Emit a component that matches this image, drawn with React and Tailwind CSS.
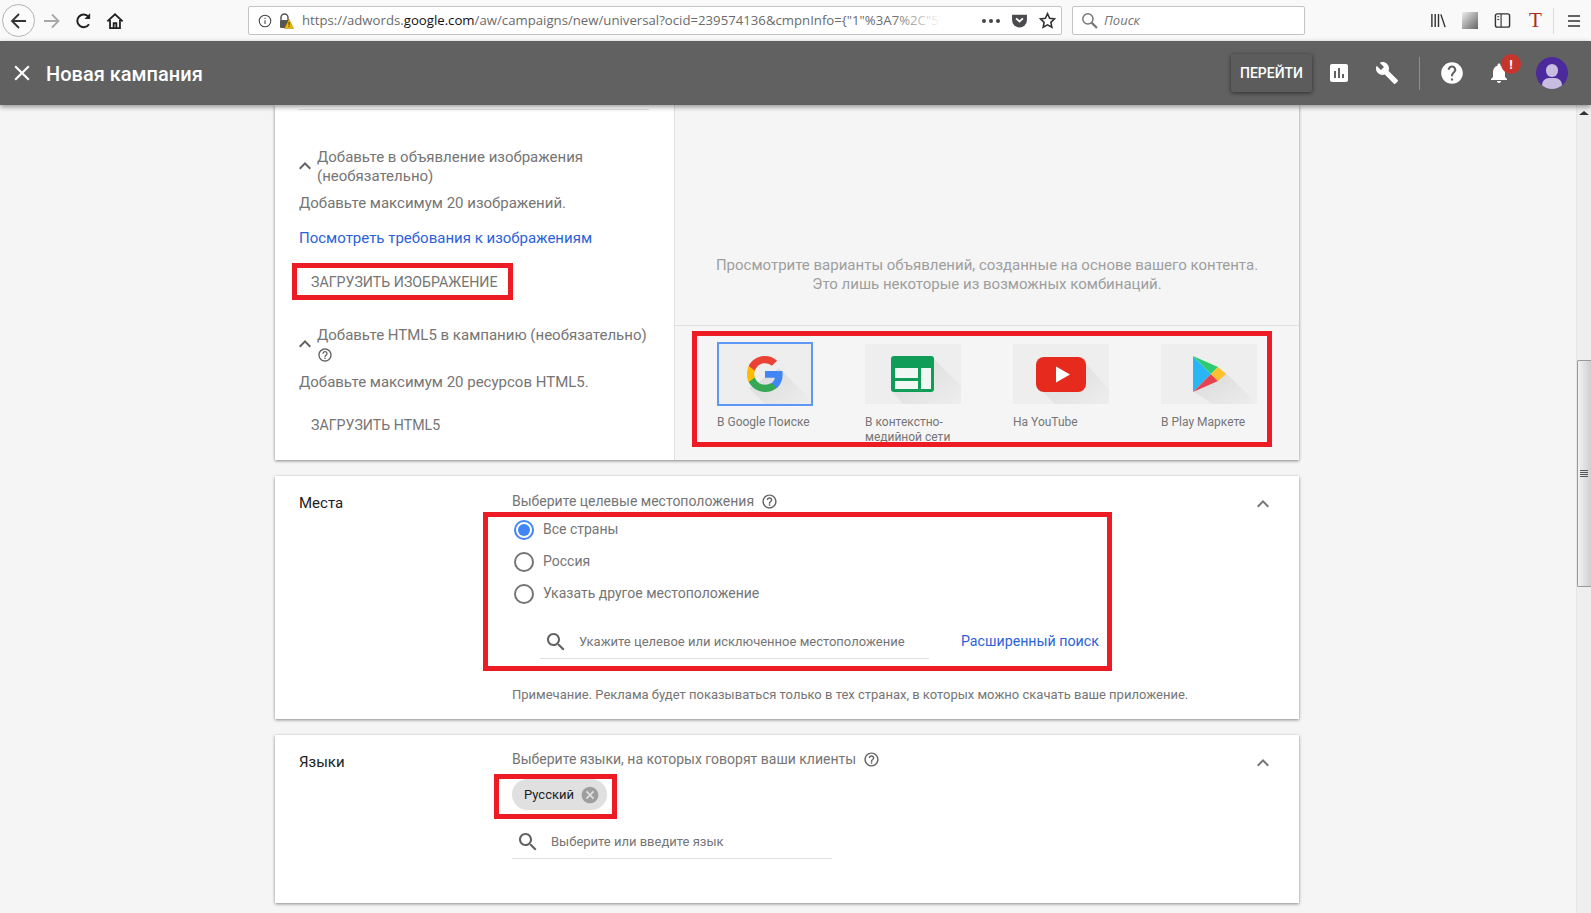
import React from "react";

const P = {
  assess: "M19 3H5c-1.1 0-2 .9-2 2v14c0 1.1.9 2 2 2h14c1.1 0 2-.9 2-2V5c0-1.1-.9-2-2-2zM9 17H7v-7h2v7zm4 0h-2V7h2v10zm4 0h-2v-4h2v4z",
  wrench: "M22.7 19l-9.1-9.1c.9-2.3.4-5-1.5-6.9-2-2-5-2.4-7.4-1.3L9 6 6 9 1.6 4.7C.4 7.1.9 10.1 2.9 12.1c1.9 1.9 4.6 2.4 6.9 1.5l9.1 9.1c.4.4 1 .4 1.4 0l2.3-2.3c.5-.4.5-1.1.1-1.4z",
  help: "M12 2C6.48 2 2 6.48 2 12s4.48 10 10 10 10-4.48 10-10S17.52 2 12 2zm1 17h-2v-2h2v2zm2.07-7.75l-.9.92C13.45 12.9 13 13.5 13 15h-2v-.5c0-1.1.45-2.1 1.17-2.83l1.24-1.26c.37-.36.59-.86.59-1.41 0-1.1-.9-2-2-2s-2 .9-2 2H8c0-2.21 1.79-4 4-4s4 1.79 4 4c0 .88-.36 1.68-.93 2.25z",
  bell: "M12 22c1.1 0 2-.9 2-2h-4c0 1.1.89 2 2 2zm6-6v-5c0-3.07-1.64-5.64-4.5-6.32V4c0-.83-.67-1.5-1.5-1.5s-1.5.67-1.5 1.5v.68C7.63 5.36 6 7.92 6 11v5l-2 2v1h16v-1l-2-2z",
  helpO: "M11 18h2v-2h-2v2zm1-16C6.48 2 2 6.48 2 12s4.48 10 10 10 10-4.48 10-10S17.52 2 12 2zm0 18c-4.41 0-8-3.59-8-8s3.59-8 8-8 8 3.59 8 8-3.59 8-8 8zm0-14c-2.21 0-4 1.79-4 4h2c0-1.1.9-2 2-2s2 .9 2 2c0 2-3 1.75-3 5h2c0-2.25 3-2.5 3-5 0-2.21-1.79-4-4-4z",
  search: "M15.5 14h-.79l-.28-.27C15.41 12.59 16 11.11 16 9.5 16 5.91 13.09 3 9.5 3S3 5.91 3 9.5 5.91 16 9.5 16c1.61 0 3.09-.59 4.23-1.57l.27.28v.79l5 4.99L20.49 19l-4.99-5zm-6 0C7.01 14 5 11.99 5 9.5S7.01 5 9.5 5 14 7.01 14 9.5 11.99 14 9.5 14z",
  close: "M19 6.41L17.59 5 12 10.59 6.41 5 5 6.41 10.59 12 5 17.59 6.41 19 12 13.41 17.59 19 19 17.59 13.41 12z",
  less: "M12 8l-6 6 1.41 1.41L12 10.83l4.59 4.58L18 14z",
  cancel: "M12 2C6.47 2 2 6.47 2 12s4.47 10 10 10 10-4.47 10-10S17.53 2 12 2zm5 13.59L15.59 17 12 13.41 8.41 17 7 15.59 10.59 12 7 8.41 8.41 7 12 10.59 15.59 7 17 8.41 13.41 12 17 15.59z",
};

function Ic({ d, className }) {
  return (
    <svg viewBox="0 0 24 24" className={className} fill="currentColor">
      <path d={d} />
    </svg>
  );
}

function Red({ className }) {
  return <div className={"absolute border-[5px] border-[#ed1c24] pointer-events-none " + className} />;
}

function BrowserBar() {
  return (
    <div className="h-[41px] shrink-0 bg-[#f9f9fa] flex items-center text-[#4a4a4f]" style={{ fontFamily: '"Open Sans", sans-serif' }}>
      <div className="ml-[2px] w-[33px] h-[33px] rounded-full border border-[#b1b1b3] bg-[#fbfbfb] flex items-center justify-center">
        <svg viewBox="0 0 20 20" className="w-[20px] h-[20px]" fill="none" stroke="#333" strokeWidth="1.8"><path d="M17 10H3.5M10 3l-7 7 7 7" /></svg>
      </div>
      <svg viewBox="0 0 20 20" className="ml-[7px] w-[20px] h-[20px]" fill="none" stroke="#a8a8a8" strokeWidth="1.8"><path d="M2 10h14M10 3.5l6.5 6.5-6.5 6.5" /></svg>
      <svg viewBox="0 0 20 20" className="ml-[13px] w-[18px] h-[18px]" fill="none" stroke="#222" strokeWidth="2.2"><path d="M15.5 13.5A7 7 0 1 1 15 5.5" /><path d="M16.8 1.5v6.3h-6.3z" fill="#222" stroke="none" /></svg>
      <svg viewBox="0 0 20 20" className="ml-[13px] w-[18px] h-[18px]" fill="none" stroke="#222" strokeWidth="2"><path d="M1.5 10.5L10 2.5l8.5 8M4.5 9v9h11V9" /><path d="M8.5 18v-5.5h3V18" /></svg>

      <div className="ml-[124px] w-[814px] h-[29px] bg-white border border-[#c4c4c4] rounded-[2px] flex items-center">
        <svg viewBox="0 0 16 16" className="ml-[9px] w-[14px] h-[14px]" fill="none" stroke="#444" strokeWidth="1.2"><circle cx="8" cy="8" r="6.6" /><path d="M8 7v4.5M8 4.2v1.6" /></svg>
        <svg viewBox="0 0 16 16" className="ml-[6px] w-[16px] h-[16px]">
          <path d="M3 7V4.5a3.5 3.5 0 0 1 7 0V7" fill="none" stroke="#555" strokeWidth="1.5" />
          <rect x="2" y="7" width="9" height="8" rx="1" fill="#555" />
          <path d="M11 6l4.6 9.5H6.4z" fill="#f5b800" stroke="#8a6d00" strokeWidth=".4" />
          <rect x="10.6" y="9" width=".9" height="3.4" fill="#222" />
          <rect x="10.6" y="13" width=".9" height="1" fill="#222" />
        </svg>
        <div className="relative ml-[8px] pt-[1px] w-[640px] overflow-hidden whitespace-nowrap text-[13.2px] text-[#6b6b6b]">
          https://adwords.<span className="text-[#111]">google.com</span>/aw/campaigns/new/universal?ocid=239574136&amp;cmpnInfo={"{"}"1"%3A7%2C"5"
          <div className="absolute right-0 top-0 bottom-0 w-[50px] bg-gradient-to-r from-transparent to-white" />
        </div>
        <div className="ml-[40px] flex gap-[3px]">
          <span className="w-[4px] h-[4px] rounded-full bg-[#444]" />
          <span className="w-[4px] h-[4px] rounded-full bg-[#444]" />
          <span className="w-[4px] h-[4px] rounded-full bg-[#444]" />
        </div>
        <svg viewBox="0 0 16 16" className="ml-[11px] w-[17px] h-[17px]"><path d="M1 2.5h14v5a7 7 0 0 1-14 0z" fill="#4a4a4f" /><path d="M4.8 6l3.2 3 3.2-3" fill="none" stroke="#fff" strokeWidth="1.8" /></svg>
        <svg viewBox="0 0 16 16" className="ml-[11px] w-[17px] h-[17px]" fill="none" stroke="#333" strokeWidth="1.5"><path d="M8 1.6l2 4.3 4.6.6-3.4 3.2.9 4.7L8 12.1l-4.1 2.3.9-4.7L1.4 6.5 6 5.9z" /></svg>
      </div>

      <div className="ml-[10px] w-[233px] h-[29px] bg-white border border-[#c4c4c4] rounded-[2px] flex items-center">
        <svg viewBox="0 0 16 16" className="ml-[8px] w-[17px] h-[17px]" fill="none" stroke="#777" strokeWidth="1.4"><circle cx="6.5" cy="6.5" r="4.8" /><path d="M10 10l5 5" strokeWidth="2" /></svg>
        <span className="ml-[6px] pt-[1px] text-[13px] italic text-[#757575]">Поиск</span>
      </div>

      <svg viewBox="0 0 18 18" className="ml-[125px] w-[17px] h-[17px]" fill="none" stroke="#333" strokeWidth="1.5"><path d="M2 2v14M5.5 2v14M9 2v14M11.5 2.5L16 16" /></svg>
      <div className="ml-[15px] w-[16px] h-[17px] bg-gradient-to-br from-[#eeeeee] to-[#666666]" />
      <svg viewBox="0 0 18 18" className="ml-[16px] w-[17px] h-[17px]" fill="none" stroke="#333" strokeWidth="1.5"><rect x="1.5" y="2" width="15" height="14" rx="2" /><path d="M7.5 2v14M3.5 5h2M3.5 8h2" strokeWidth="1.2" /></svg>
      <span className="ml-[18px] text-[21px] leading-none text-[#b02a1c]" style={{ fontFamily: '"Liberation Serif", serif' }}>T</span>
      <div className="ml-[11px] w-px h-[26px] bg-[#dcdcdc]" />
      <svg viewBox="0 0 14 14" className="ml-[13px] w-[14px] h-[14px]" fill="none" stroke="#333" strokeWidth="1.7"><path d="M1 2h12M1 7h12M1 12h12" /></svg>
    </div>
  );
}

function Header() {
  return (
    <div className="relative z-10 h-[64px] shrink-0 bg-[#616161] shadow-[0_2px_5px_rgba(0,0,0,0.4)] flex items-center text-white pr-[23px]">
      <Ic d={P.close} className="ml-[9px] w-[26px] h-[26px]" />
      <span className="ml-[11px] pt-[2px] text-[20px] font-medium">Новая кампания</span>
      <div className="ml-auto w-[81px] h-[38px] rounded-[2px] bg-[#5c5c5c] shadow-[0_1px_4px_rgba(0,0,0,0.55)] flex items-center justify-center text-[14px] font-medium">ПЕРЕЙТИ</div>
      <Ic d={P.assess} className="ml-[15px] w-[24px] h-[24px]" />
      <Ic d={P.wrench} className="ml-[24px] w-[24px] h-[24px]" />
      <div className="ml-[20px] w-px h-[33px] bg-[#8f8f8f]" />
      <Ic d={P.help} className="ml-[19px] w-[26px] h-[26px]" />
      <div className="relative ml-[22px] w-[24px] h-[24px]">
        <Ic d={P.bell} className="w-[24px] h-[24px]" />
        <div className="absolute left-[14px] -top-[7px] w-[20px] h-[20px] rounded-full bg-[#c5352b] flex items-center justify-center text-[13px] font-bold leading-none">!</div>
      </div>
      <div className="relative ml-[25px] w-[32px] h-[32px] rounded-full bg-[#4c2a9c] overflow-hidden">
        <div className="absolute left-[10px] top-[7px] w-[12px] h-[13px] rounded-full bg-[#c8bde0]" />
        <div className="absolute left-[6px] top-[21px] w-[20px] h-[14px] rounded-full bg-[#c8bde0]" />
      </div>
    </div>
  );
}

function Tile({ children, selected, label }) {
  return (
    <div className="w-[96px]">
      <div className="relative w-[96px] h-[60px]">
        <div className="w-[96px] h-[60px] bg-[#eeeeee] overflow-hidden">{children}</div>
        {selected && <div className="absolute inset-x-0 -top-[2px] -bottom-[2px] border-2 border-[#5e97f6]" />}
      </div>
      <div className="mt-[11px] text-[12px] leading-[15px] text-[#757575]">{label}</div>
    </div>
  );
}

function GoogleTile() {
  return (
    <svg viewBox="0 0 96 60" className="w-[96px] h-[60px]">
      <defs>
        <linearGradient id="sg" x1="0" y1="0" x2="1" y2="1"><stop offset="0" stopColor="#d8d8d8" /><stop offset="1" stopColor="#eeeeee" /></linearGradient>
      </defs>
      <path d="M62 24L96 58v2H48L32 44z" fill="url(#sg)" />
      <g transform="translate(30 12) scale(.75)">
        <path fill="#4285F4" d="M47.5 24.6c0-1.6-.1-3.1-.4-4.6H24v9.1h13.2c-.6 3-2.3 5.6-4.9 7.3v6.1h7.9c4.6-4.3 7.3-10.6 7.3-17.9z" />
        <path fill="#34A853" d="M24 48c6.5 0 11.9-2.1 15.9-5.8l-7.9-6.1c-2.2 1.5-4.9 2.3-8 2.3-6.3 0-11.6-4.2-13.5-9.9H2.3v6.3C6.3 42.7 14.5 48 24 48z" />
        <path fill="#FBBC05" d="M10.5 28.5c-.5-1.5-.8-3-.8-4.5s.3-3.1.8-4.5v-6.3H2.3C.8 16.3 0 20 0 24s.8 7.7 2.3 10.8z" />
        <path fill="#EA4335" d="M24 9.5c3.5 0 6.7 1.2 9.2 3.6l6.9-6.9C35.9 2.4 30.5 0 24 0 14.5 0 6.3 5.3 2.3 13.2l8.2 6.3C12.4 13.7 17.7 9.5 24 9.5z" />
      </g>
    </svg>
  );
}

function DisplayTile() {
  return (
    <svg viewBox="0 0 96 60" className="w-[96px] h-[60px]">
      <defs>
        <linearGradient id="sd" x1="0" y1="0" x2="1" y2="1"><stop offset="0" stopColor="#d8d8d8" /><stop offset="1" stopColor="#eeeeee" /></linearGradient>
      </defs>
      <path d="M66 12L96 42v18H38L26 46z" fill="url(#sd)" />
      <rect x="26" y="12" width="43" height="36" rx="3" fill="#0f9d58" />
      <rect x="30" y="24" width="23" height="10" fill="#f1f8f4" />
      <rect x="30" y="37" width="23" height="8" fill="#f1f8f4" />
      <rect x="56" y="24" width="10" height="21" fill="#f1f8f4" />
    </svg>
  );
}

function YoutubeTile() {
  return (
    <svg viewBox="0 0 96 60" className="w-[96px] h-[60px]">
      <defs>
        <linearGradient id="sy" x1="0" y1="0" x2="1" y2="1"><stop offset="0" stopColor="#d8d8d8" /><stop offset="1" stopColor="#eeeeee" /></linearGradient>
      </defs>
      <path d="M68 14L96 46v14H42L28 46z" fill="url(#sy)" />
      <rect x="23" y="13" width="50" height="35" rx="8" fill="#e62b1e" />
      <path d="M43 22.5l14 8-14 8z" fill="#fff" />
    </svg>
  );
}

function PlayTile() {
  return (
    <svg viewBox="0 0 96 60" className="w-[96px] h-[60px]">
      <defs>
        <linearGradient id="sp" x1="0" y1="0" x2="1" y2="1"><stop offset="0" stopColor="#d8d8d8" /><stop offset="1" stopColor="#eeeeee" /></linearGradient>
      </defs>
      <path d="M64 28L96 60H52L33 48z" fill="url(#sp)" />
      <path d="M32 12v36l18-18z" fill="#29b6f6" />
      <path d="M32 12l18 18 7-7z" fill="#2ecc71" />
      <path d="M32 48l18-18 7 7z" fill="#e8414f" />
      <path d="M57 23l-7 7 7 7 8-7z" fill="#fbc02d" />
    </svg>
  );
}

function Card1() {
  return (
    <div className="relative bg-white shadow-[0_1px_3px_rgba(0,0,0,0.45)] flex h-[355px]">
      <div className="w-[400px] shrink-0 border-r border-[#e0e0e0] pl-[24px] pr-[25px] pt-[4px] text-[15px] leading-[19px] text-[#757575]">
        <div className="h-px bg-[#e0e0e0]" />
        <div className="mt-[38px] flex">
          <Ic d={P.less} className="mt-[6px] -ml-[6px] w-[24px] h-[24px] text-[#616161] shrink-0" />
          <div>Добавьте в объявление изображения<br />(необязательно)</div>
        </div>
        <div className="mt-[8px]">Добавьте максимум 20 изображений.</div>
        <div className="mt-[16px] text-[#2b62d9]">Посмотреть требования к изображениям</div>
        <div className="mt-[25px] ml-[12px] text-[14.2px]">ЗАГРУЗИТЬ ИЗОБРАЖЕНИЕ</div>
        <div className="mt-[34px] flex">
          <Ic d={P.less} className="mt-[6px] -ml-[6px] w-[24px] h-[24px] text-[#616161] shrink-0" />
          <div>
            <div className="whitespace-nowrap">Добавьте HTML5 в кампанию (необязательно)</div>
            <Ic d={P.helpO} className="w-[16px] h-[16px] mt-[2px] text-[#616161]" />
          </div>
        </div>
        <div className="mt-[10px]">Добавьте максимум 20 ресурсов HTML5.</div>
        <div className="mt-[24px] ml-[12px] text-[14.2px]">ЗАГРУЗИТЬ HTML5</div>
      </div>
      <div className="flex-1 bg-[#f5f5f5] flex flex-col">
        <div className="h-[221px] border-b border-[#e0e0e0] flex flex-col justify-end pb-[31px] text-center text-[15px] leading-[19px] text-[#9e9e9e]">
          <div>Просмотрите варианты объявлений, созданные на основе вашего контента.</div>
          <div>Это лишь некоторые из возможных комбинаций.</div>
        </div>
        <div className="pl-[42px] pt-[18px] flex gap-[52px]">
          <Tile selected label="В Google Поиске"><GoogleTile /></Tile>
          <Tile label="В контекстно-медийной сети"><DisplayTile /></Tile>
          <Tile label="На YouTube"><YoutubeTile /></Tile>
          <Tile label="В Play Маркете"><PlayTile /></Tile>
        </div>
      </div>
      <Red className="left-[17px] top-[158px] w-[221px] h-[37px]" />
      <Red className="left-[417px] top-[226px] w-[580px] h-[116px]" />
    </div>
  );
}

function Radio({ on, label }) {
  return (
    <div className="h-[32px] flex items-center text-[14px] text-[#757575]">
      <div className={"w-[20px] h-[20px] rounded-full border-2 flex items-center justify-center " + (on ? "border-[#4285f4]" : "border-[#757575]")}>
        {on && <div className="w-[12px] h-[12px] rounded-full bg-[#4285f4]" />}
      </div>
      <span className="ml-[9px] pb-[2px]">{label}</span>
    </div>
  );
}

function Card2() {
  return (
    <div className="relative mt-[16px] bg-white shadow-[0_1px_3px_rgba(0,0,0,0.45)] flex h-[243px]">
      <div className="w-[237px] shrink-0 pl-[24px] pt-[18px] text-[15px] leading-[19px] text-[#212121]">Места</div>
      <div className="flex-1 pt-[16px]">
        <div className="flex items-center text-[14px] leading-[19px] text-[#757575]">
          Выберите целевые местоположения
          <Ic d={P.helpO} className="ml-[7px] w-[17px] h-[17px] text-[#616161]" />
        </div>
        <div className="mt-[3px] pl-[2px]">
          <Radio on label="Все страны" />
          <Radio label="Россия" />
          <Radio label="Указать другое местоположение" />
        </div>
        <div className="mt-[15px] ml-[28px] flex items-start">
          <div className="w-[389px] h-[34px] border-b border-[#e0e0e0] flex items-center">
            <Ic d={P.search} className="ml-[4px] w-[24px] h-[24px] text-[#616161]" />
            <span className="ml-[11px] text-[13px] text-[#757575]">Укажите целевое или исключенное местоположение</span>
          </div>
          <div className="ml-[32px] h-[34px] flex items-center text-[14.2px] text-[#2b62d9] whitespace-nowrap pb-[1px]">Расширенный поиск</div>
        </div>
        <div className="mt-[28px] text-[13px] leading-[16px] text-[#757575] whitespace-nowrap">Примечание. Реклама будет показываться только в тех странах, в которых можно скачать ваше приложение.</div>
      </div>
      <Ic d={P.less} className="mt-[16px] mr-[24px] w-[24px] h-[24px] text-[#757575] shrink-0" />
      <Red className="left-[208px] top-[36px] w-[629px] h-[159px]" />
    </div>
  );
}

function Card3() {
  return (
    <div className="relative mt-[16px] bg-white shadow-[0_1px_3px_rgba(0,0,0,0.45)] flex h-[168px]">
      <div className="w-[237px] shrink-0 pl-[24px] pt-[18px] text-[15px] leading-[19px] text-[#212121]">Языки</div>
      <div className="flex-1 pt-[15px]">
        <div className="flex items-center text-[14px] leading-[19px] text-[#757575]">
          Выберите языки, на которых говорят ваши клиенты
          <Ic d={P.helpO} className="ml-[7px] w-[17px] h-[17px] text-[#616161]" />
        </div>
        <div className="mt-[10px] w-[95px] h-[31px] rounded-full bg-[#e0e0e0] flex items-center pl-[12px] text-[13px] text-[#212121]">
          Русский
          <Ic d={P.cancel} className="ml-[6px] w-[20px] h-[20px] text-[#9e9e9e]" />
        </div>
        <div className="mt-[15px] w-[320px] h-[34px] border-b border-[#e0e0e0] flex items-center">
          <Ic d={P.search} className="ml-[4px] w-[24px] h-[24px] text-[#616161]" />
          <span className="ml-[11px] text-[13px] text-[#757575]">Выберите или введите язык</span>
        </div>
      </div>
      <Ic d={P.less} className="mt-[16px] mr-[24px] w-[24px] h-[24px] text-[#757575] shrink-0" />
      <Red className="left-[219px] top-[39px] w-[123px] h-[45px]" />
    </div>
  );
}

function Scrollbar() {
  return (
    <div className="w-[15px] shrink-0 bg-[#eeeeee] border-l border-[#e6e6e6] flex flex-col items-center">
      <div className="mt-[6px] w-0 h-0 border-l-[5px] border-r-[5px] border-b-[4px] border-l-transparent border-r-transparent border-b-[#333]" />
      <div className="mt-[245px] w-[15px] h-[227px] border border-[#9a9a9a] rounded-[1px] bg-gradient-to-r from-[#f2f2f2] to-[#cfcfd2] flex flex-col items-center justify-center gap-[1px]">
        <div className="w-[8px] h-px bg-[#555]" />
        <div className="w-[8px] h-px bg-[#555]" />
        <div className="w-[8px] h-px bg-[#555]" />
        <div className="w-[8px] h-px bg-[#555]" />
      </div>
    </div>
  );
}

export default function App() {
  return (
    <div className="w-[1591px] h-[913px] overflow-hidden flex flex-col bg-[#f5f5f5]" style={{ fontFamily: 'Roboto, sans-serif' }}>
      <BrowserBar />
      <Header />
      <div className="flex-1 flex min-h-0">
        <div className="flex-1 pl-[275px] pr-[277px]">
          <Card1 />
          <Card2 />
          <Card3 />
        </div>
        <Scrollbar />
      </div>
    </div>
  );
}
